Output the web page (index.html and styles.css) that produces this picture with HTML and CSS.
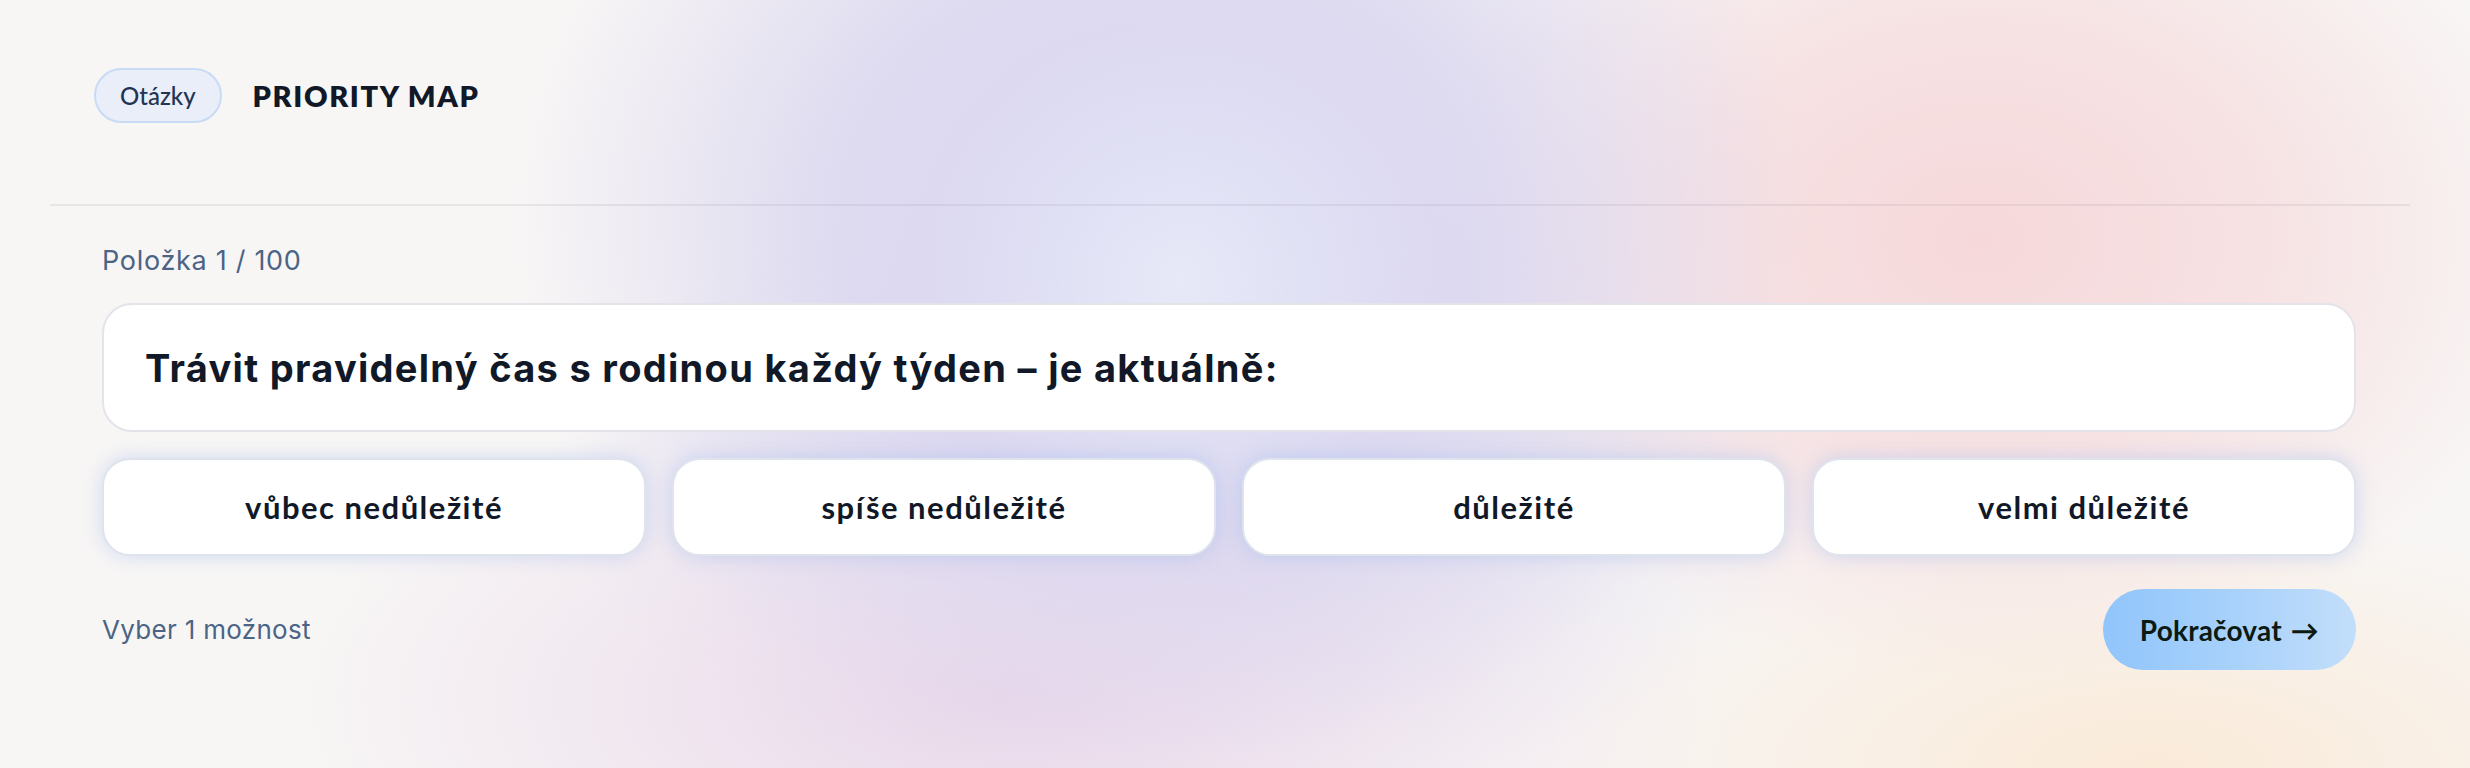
FILE: index.html
```html
<!DOCTYPE html>
<html lang="cs">
<head>
<meta charset="utf-8">
<title>Priority Map</title>
<link rel="stylesheet" href="styles.css">
</head>
<body>
<div class="app">
  <header class="header">
    <span class="pill">Otázky</span>
    <h1 class="title">PRIORITY MAP</h1>
  </header>
  <main class="main">
    <div class="counter">Položka 1 / 100</div>
    <section class="card">
      <h2 class="question">Trávit pravidelný čas s rodinou každý týden – je aktuálně:</h2>
    </section>
    <div class="options">
      <button class="option">vůbec nedůležité</button>
      <button class="option">spíše nedůležité</button>
      <button class="option">důležité</button>
      <button class="option">velmi důležité</button>
    </div>
    <div class="footer">
      <span class="hint">Vyber 1 možnost</span>
      <button class="next">Pokračovat <span class="arrow">→</span></button>
    </div>
  </main>
</div>
</body>
</html>
```

FILE: styles.css
```css
* { box-sizing: border-box; }

html, body {
  margin: 0;
  height: 100%;
}

body {
  width: 2470px;
  height: 768px;
  overflow: hidden;
  font-family: "Inter", "Liberation Sans", sans-serif;
  background-color: #f8f6f5;
  background-image:
    radial-gradient(ellipse 260px 260px at 1180px 280px, rgba(232,235,248,0.9) 0%, rgba(232,235,248,0) 100%),
    radial-gradient(ellipse 650px 540px at 1160px 220px, rgba(216,214,242,1) 0%, rgba(218,214,240,0.85) 50%, rgba(220,214,238,0) 100%),
    radial-gradient(ellipse 580px 440px at 1980px 240px, rgba(246,216,218,1) 0%, rgba(246,218,220,0.7) 50%, rgba(246,220,222,0) 100%),
    radial-gradient(ellipse 620px 260px at 2150px 768px, rgba(250,234,216,1) 0%, rgba(250,236,220,0) 100%),
    radial-gradient(ellipse 720px 320px at 1000px 700px, rgba(232,214,234,0.95) 0%, rgba(232,216,236,0) 100%),
    radial-gradient(ellipse 650px 320px at 1200px 480px, rgba(214,214,240,0.75) 0%, rgba(214,214,240,0) 100%);
}

.app {
  padding: 0 60px 0 50px;
}

.header {
  display: flex;
  align-items: center;
  gap: 31px;
  padding: 68px 0 81px 44px;
  border-bottom: 2px solid rgba(150, 140, 160, 0.16);
}

.pill {
  display: inline-flex;
  align-items: center;
  justify-content: center;
  height: 55px;
  padding: 0 24px;
  border-radius: 28px;
  background: #e9eef9;
  border: 2px solid #c8dbf6;
  color: #1f3553;
  font-family: "Lato", sans-serif;
  font-size: 24px;
  font-weight: 500;
}

.title {
  margin: 0;
  font-family: "Lato", sans-serif;
  font-size: 29px;
  font-weight: 800;
  letter-spacing: 1.6px;
  color: #111827;
}

.main {
  padding: 40px 54px 0 52px;
}

.counter {
  font-size: 27px;
  line-height: 30px;
  letter-spacing: 0.7px;
  color: #4b6485;
  margin-bottom: 27px;
}

.card {
  height: 129px;
  display: flex;
  align-items: center;
  padding: 0 41px;
  background: #ffffff;
  border: 2px solid #e4e3e9;
  border-radius: 30px;
}

.question {
  margin: 0;
  font-size: 38px;
  font-weight: 700;
  color: #111827;
  letter-spacing: 1.3px;
}

.options {
  display: grid;
  grid-template-columns: repeat(4, 1fr);
  gap: 26px;
  margin-top: 26px;
}

.option {
  height: 98px;
  background: #ffffff;
  border: 2px solid #dfe3ec;
  border-radius: 28px;
  box-shadow: 0 0 20px rgba(150, 178, 236, 0.42);
  font-family: "Lato", sans-serif;
  font-size: 31px;
  font-weight: 700;
  letter-spacing: 1.5px;
  color: #111827;
  cursor: pointer;
}

.footer {
  display: flex;
  align-items: center;
  justify-content: space-between;
  margin-top: 33px;
}

.hint {
  font-size: 26px;
  letter-spacing: 0.3px;
  color: #4b6485;
}

.next {
  height: 81px;
  padding: 0 37px;
  border: none;
  border-radius: 41px;
  background: linear-gradient(90deg, #91c5fb 0%, #a9d2fb 55%, #c3defa 100%);
  font-family: "Lato", sans-serif;
  font-size: 28px;
  font-weight: 700;
  letter-spacing: 0.2px;
  color: #0c1a12;
  cursor: pointer;
}

.arrow {
  margin-left: 2px;
}
```
